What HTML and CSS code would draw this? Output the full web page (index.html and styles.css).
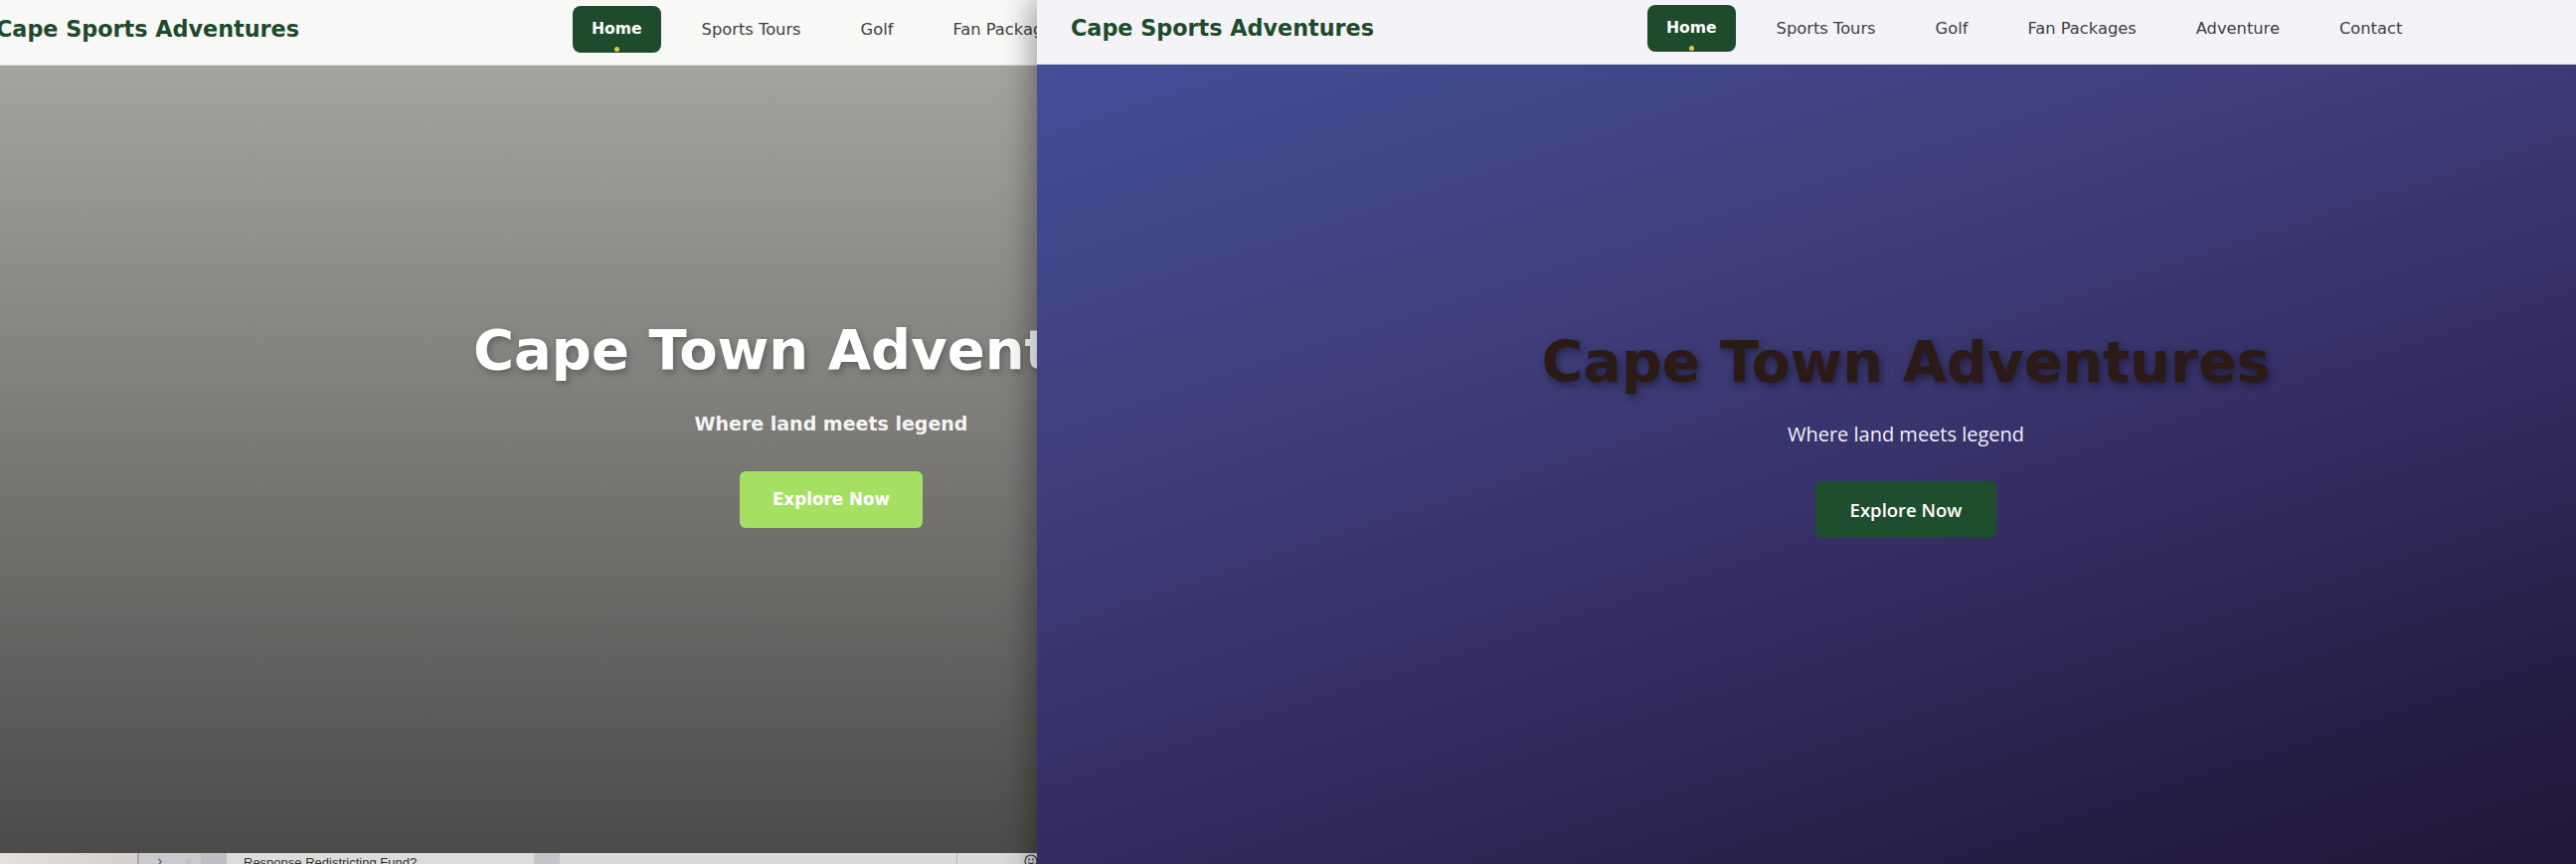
FILE: index.html
```html
<!DOCTYPE html>
<html lang="en">
<head>
<meta charset="utf-8">
<title>Cape Sports Adventures</title>
<link rel="stylesheet" href="styles.css">
</head>
<body>
<div class="desktop">
  <div class="taskbar">
    <div class="tb-seg tb-start"></div>
    <div class="tb-seg tb-nav"><span class="tb-chev">&#8250;</span><span class="tb-square"></span></div>
    <div class="tb-seg tb-dark"></div>
    <div class="tb-seg tb-task"><span class="tb-text">Response Redistricting Fund?</span></div>
    <div class="tb-seg tb-dark tb-narrow"></div>
    <div class="tb-seg tb-wide"></div>
    <div class="tb-seg tb-tray">
      <svg class="tb-smile" width="14" height="14" viewBox="0 0 14 14"><circle cx="7" cy="7" r="6" fill="none" stroke="#3a3a3a" stroke-width="1.2"/><circle cx="5" cy="5.5" r="0.9" fill="#3a3a3a"/><circle cx="9" cy="5.5" r="0.9" fill="#3a3a3a"/><path d="M4.2 8.3 Q7 11 9.8 8.3" fill="none" stroke="#3a3a3a" stroke-width="1.1"/></svg>
    </div>
  </div>

  <div class="window window-left">
    <header class="site-header header-light">
      <div class="logo">Cape Sports Adventures</div>
      <nav class="nav">
        <a class="nav-link active" href="#">Home</a>
        <a class="nav-link" href="#">Sports Tours</a>
        <a class="nav-link" href="#">Golf</a>
        <a class="nav-link" href="#">Fan Packages</a>
        <a class="nav-link" href="#">Adventure</a>
        <a class="nav-link" href="#">Contact</a>
      </nav>
    </header>
    <section class="hero hero-grey">
      <h1 class="hero-title title-white">Cape Town Adventures</h1>
      <p class="hero-sub sub-bold">Where land meets legend</p>
      <a class="hero-btn btn-lime" href="#">Explore Now</a>
    </section>
  </div>

  <div class="window window-right">
    <header class="site-header header-cool">
      <div class="logo">Cape Sports Adventures</div>
      <nav class="nav">
        <a class="nav-link active" href="#">Home</a>
        <a class="nav-link" href="#">Sports Tours</a>
        <a class="nav-link" href="#">Golf</a>
        <a class="nav-link" href="#">Fan Packages</a>
        <a class="nav-link" href="#">Adventure</a>
        <a class="nav-link" href="#">Contact</a>
      </nav>
    </header>
    <section class="hero hero-purple">
      <h1 class="hero-title title-dark">Cape Town Adventures</h1>
      <p class="hero-sub sub-light">Where land meets legend</p>
      <a class="hero-btn btn-green" href="#">Explore Now</a>
    </section>
  </div>
</div>
</body>
</html>
```

FILE: styles.css
```css
html, body {
  margin: 0;
  padding: 0;
  width: 2591px;
  height: 869px;
  overflow: hidden;
  background: #d9d9d9;
}

.desktop {
  position: relative;
  width: 2591px;
  height: 869px;
  overflow: hidden;
  background: #d9d9d9;
}

/* ---------- bottom task strip ---------- */
.taskbar {
  position: absolute;
  left: 0;
  top: 858px;
  width: 2591px;
  height: 30px;
  display: flex;
  font-family: "Liberation Sans", Arial, sans-serif;
}
.tb-seg { height: 100%; position: relative; }
.tb-start { width: 138px; background: linear-gradient(90deg, #e3e0dd, #d3cfcc); border-right: 2px solid #a9a7a6; }
.tb-nav { width: 62px; background: #cacace; }
.tb-chev { position: absolute; left: 18px; top: 0; font-size: 16px; color: #5a5a5e; line-height: 16px; }
.tb-square { position: absolute; left: 47px; top: 6px; width: 5px; height: 5px; background: #bdbdc2; }
.tb-dark { width: 26px; background: #bdbdc4; }
.tb-narrow { width: 26px; background: #c3c3c9; }
.tb-task { width: 309px; background: linear-gradient(180deg, #dededd, #d4d4d4); }
.tb-text { position: absolute; left: 17px; top: 2px; font-size: 13px; color: #333; white-space: nowrap; }
.tb-wide { width: 399px; background: linear-gradient(180deg, #dcdcdc, #d2d2d2); border-right: 1px solid #b5b5b5; }
.tb-tray { flex: 1; background: linear-gradient(180deg, #dcdcdc, #d2d2d2); }
.tb-smile { position: absolute; left: 67px; top: 1px; }

/* ---------- windows ---------- */
.window {
  position: absolute;
  width: 1748px;
  display: flex;
  flex-direction: column;
  overflow: hidden;
}
.window-left {
  left: -38px;
  top: 0;
  height: 858px;
}
.window-right {
  left: 1043px;
  top: 0;
  height: 884px;
  box-shadow: -8px 0 26px rgba(0, 0, 0, 0.32);
}

/* ---------- header ---------- */
.site-header {
  box-sizing: border-box;
  height: 65px;
  flex: none;
  padding: 0 34px 8px;
  display: grid;
  grid-template-columns: 580px auto;
  align-items: center;
  border-bottom: 1px solid #dcdcd9;
}
.header-light {
  height: 66px;
  padding-top: 1px;
  background: #f8f8f7;
}
.header-cool {
  background: #f4f4f8;
  border-bottom-color: #dfdfe6;
}

.logo {
  font-family: "DejaVu Sans", "Liberation Sans", sans-serif;
  font-weight: 700;
  font-size: 22.3px;
  color: #1d4b2b;
  white-space: nowrap;
}

.nav {
  display: flex;
  gap: 22px;
}
.nav-link {
  position: relative;
  display: block;
  height: 47px;
  line-height: 47px;
  padding: 0 19px;
  font-family: "DejaVu Sans", "Liberation Sans", sans-serif;
  font-size: 16.3px;
  color: #3f3f3f;
  text-decoration: none;
  border-radius: 8px;
  white-space: nowrap;
}
.nav-link.active {
  background: #1e4b2c;
  color: #ffffff;
  font-weight: 700;
  font-size: 15.6px;
}
.nav-link.active::after {
  content: "";
  position: absolute;
  left: 50%;
  bottom: 1px;
  width: 5px;
  height: 5px;
  margin-left: -2.5px;
  border-radius: 50%;
  background: #e6c64a;
}

/* ---------- hero ---------- */
.hero {
  flex: 1;
  display: flex;
  flex-direction: column;
  align-items: center;
}
.hero-grey {
  padding-top: 252px;
  background: linear-gradient(180deg, #a4a39f 0%, #8a8985 30%, #6c6b68 65%, #4c4b49 100%);
}
.hero-purple {
  padding-top: 265px;
  background: linear-gradient(162deg, #434f98 0%, #3f3f7c 30%, #332c61 58%, #261e45 80%, #1f1630 100%);
}

.hero-title {
  margin: 0;
  font-family: "DejaVu Sans", "Liberation Sans", sans-serif;
  font-weight: 700;
  line-height: 1.2;
  white-space: nowrap;
}
.title-white {
  font-size: 56px;
  color: #ffffff;
  margin-bottom: 28px;
  text-shadow: 2px 3px 6px rgba(0, 0, 0, 0.28);
}
.title-dark {
  font-size: 57px;
  color: #2b1a16;
  margin-bottom: 25px;
  text-shadow: 2px 3px 8px rgba(0, 0, 0, 0.45);
}

.hero-sub {
  margin: 0;
  line-height: 1.4;
}
.sub-bold {
  font-family: "DejaVu Sans", "Liberation Sans", sans-serif;
  font-weight: 700;
  font-size: 19px;
  color: #f4f4f2;
  margin-bottom: 34px;
}
.sub-light {
  font-family: "Open Sans", "Liberation Sans", sans-serif;
  font-weight: 400;
  font-size: 20px;
  color: #f1eff8;
  margin-bottom: 33px;
}

.hero-btn {
  display: block;
  height: 57px;
  line-height: 57px;
  padding: 0 33px;
  border-radius: 6px;
  color: #ffffff;
  text-decoration: none;
  white-space: nowrap;
}
.btn-lime {
  background: #a6e063;
  font-family: "DejaVu Sans", "Liberation Sans", sans-serif;
  font-weight: 700;
  font-size: 16.8px;
}
.btn-green {
  background: #1f4e2e;
  font-family: "Open Sans", "Liberation Sans", sans-serif;
  font-weight: 600;
  font-size: 18.5px;
  padding: 0 35px;
}
```
